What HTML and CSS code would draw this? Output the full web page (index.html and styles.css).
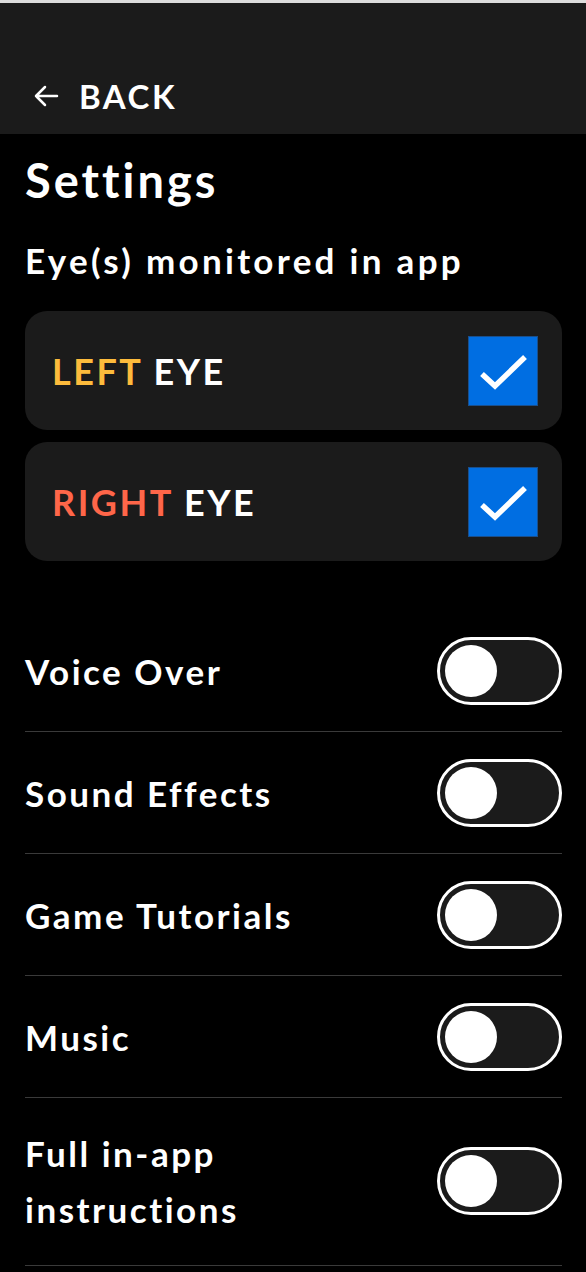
FILE: index.html
```html
<!DOCTYPE html>
<html lang="en">
<head>
    <meta charset="UTF-8">
    <meta name="viewport" content="width=device-width, initial-scale=1.0">
    <title>Settings</title>
    <link rel="stylesheet" href="styles.css">
</head>
<body>
    <div class="topbar"></div>
    <div class="header">
        <a class="back" href="#">
            <svg class="back-icon" width="26" height="24" viewBox="0 0 26 24">
                <path d="M24 12H3M12 3L3 12l9 9" fill="none" stroke="#fff" stroke-width="2.5" stroke-linecap="round" stroke-linejoin="round"/>
            </svg>
            <span>BACK</span>
        </a>
    </div>
    <div class="container">
        <h1>Settings</h1>
        <h2>Eye(s) monitored in app</h2>

        <div class="eye-card">
            <span class="eye-label"><span class="left">LEFT</span> EYE</span>
            <span class="checkbox">
                <svg width="70" height="70" viewBox="0 0 70 70">
                    <path d="M14 38l13 12 30-29" fill="none" stroke="#fff" stroke-width="5.5"/>
                </svg>
            </span>
        </div>
        <div class="eye-card">
            <span class="eye-label"><span class="right">RIGHT</span> EYE</span>
            <span class="checkbox">
                <svg width="70" height="70" viewBox="0 0 70 70">
                    <path d="M14 38l13 12 30-29" fill="none" stroke="#fff" stroke-width="5.5"/>
                </svg>
            </span>
        </div>

        <div class="options">
            <div class="option">
                <span class="option-label">Voice Over</span>
                <span class="toggle"><span class="knob"></span></span>
            </div>
            <div class="option">
                <span class="option-label">Sound Effects</span>
                <span class="toggle"><span class="knob"></span></span>
            </div>
            <div class="option">
                <span class="option-label">Game Tutorials</span>
                <span class="toggle"><span class="knob"></span></span>
            </div>
            <div class="option">
                <span class="option-label">Music</span>
                <span class="toggle"><span class="knob"></span></span>
            </div>
            <div class="option">
                <span class="option-label">Full in-app<br>instructions</span>
                <span class="toggle"><span class="knob"></span></span>
            </div>
        </div>
    </div>
</body>
</html>
```

FILE: styles.css
```css
body {
    font-family: 'Lato', 'Noto Sans', sans-serif;
    background: #000;
    color: #fff;
    margin: 0;
    padding: 0;
}
.topbar {
    height: 3px;
    background: #dcdcdc;
}
.header {
    background: #1b1b1b;
    height: 131px;
    display: flex;
    align-items: flex-end;
    padding: 0 33px 18px;
    box-sizing: border-box;
}
.back {
    display: flex;
    align-items: center;
    gap: 20px;
    color: #fff;
    text-decoration: none;
    font-size: 33px;
    font-weight: 700;
    letter-spacing: 2.5px;
}
.container {
    padding: 0 24px 0 25px;
}
h1 {
    font-size: 47px;
    font-weight: 700;
    letter-spacing: 3px;
    margin: 18px 0 0;
    line-height: 56px;
}
h2 {
    font-size: 35px;
    font-weight: 700;
    letter-spacing: 3.3px;
    margin: 30px 0 29px;
    line-height: 44px;
}
.eye-card {
    background: #1b1b1b;
    border-radius: 22px;
    height: 119px;
    display: flex;
    align-items: center;
    justify-content: space-between;
    padding: 0 24px 0 27px;
    margin-bottom: 12px;
}
.eye-label {
    font-size: 36px;
    font-weight: 700;
    letter-spacing: 2.5px;
}
.left {
    color: #fdbb3c;
}
.right {
    color: #ff6649;
}
.checkbox {
    width: 70px;
    height: 70px;
    background: #006ee2;
    border: 1px solid #1a4f8c;
    box-sizing: border-box;
    display: flex;
}
.checkbox svg {
    margin: -1px;
}
.options {
    margin-top: 49px;
}
.option {
    display: flex;
    align-items: center;
    justify-content: space-between;
    padding: 27px 0 26px;
    border-bottom: 1px solid #3a3a3a;
}
.option:last-child {
    padding-bottom: 28px;
}
.option-label {
    font-size: 35px;
    font-weight: 700;
    letter-spacing: 2.5px;
    line-height: 56px;
}
.toggle {
    width: 125px;
    height: 68px;
    border: 3px solid #fff;
    border-radius: 34px;
    background: #1b1b1b;
    box-sizing: border-box;
    display: flex;
    align-items: center;
    padding-left: 5px;
}
.knob {
    width: 52px;
    height: 52px;
    border-radius: 50%;
    background: #fff;
}
```
